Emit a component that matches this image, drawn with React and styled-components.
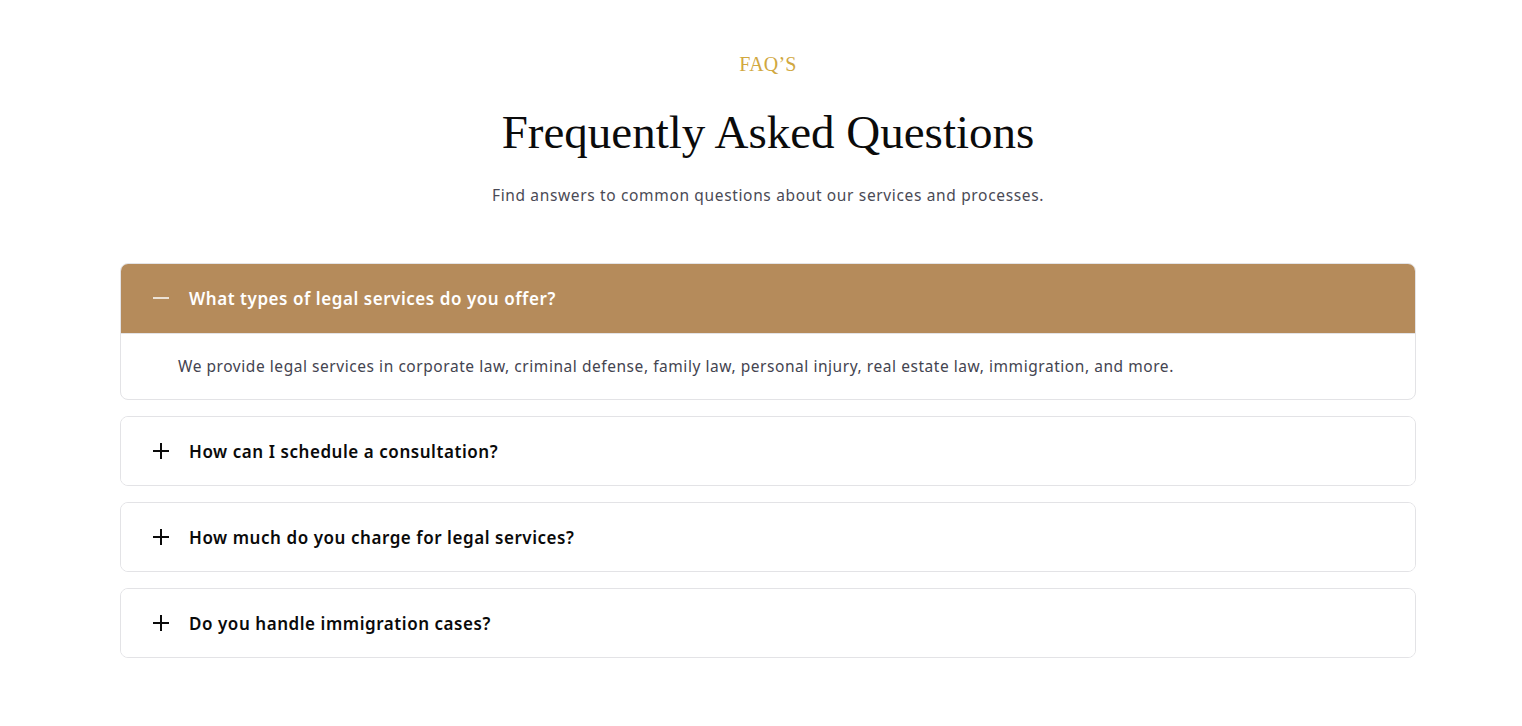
import React, { useState } from 'react';
import styled, { createGlobalStyle } from 'styled-components';

const GlobalStyle = createGlobalStyle`
    body {
        margin: 0;
        background: #ffffff;
        font-family: 'Noto Sans', 'Open Sans', sans-serif;
    }
`;

const Section = styled.section`
    padding: 50px 106px 68px 120px;
`;

const Header = styled.div`
    display: flex;
    flex-direction: column;
    align-items: center;
    text-align: center;
`;

const Eyebrow = styled.span`
    font-family: 'Liberation Serif', serif;
    font-size: 20px;
    line-height: 28px;
    color: #d1a83f;
    letter-spacing: 0.2px;
`;

const Title = styled.h2`
    margin: 25px 0 0;
    font-family: 'Liberation Serif', serif;
    font-weight: 400;
    font-size: 47px;
    line-height: 58px;
    color: #0b0b0b;
`;

const Subtitle = styled.p`
    margin: 22px 0 0;
    font-size: 15.5px;
    line-height: 24px;
    color: #4a4a55;
    letter-spacing: 0.65px;
`;

const List = styled.div`
    display: flex;
    flex-direction: column;
    gap: 16px;
    margin-top: 56px;
`;

const Item = styled.div`
    border: 1px solid #e3e3e6;
    border-radius: 8px;
    overflow: hidden;
`;

const Question = styled.button`
    display: flex;
    align-items: center;
    gap: 20px;
    height: ${(p) => (p.$open ? '70px' : '68px')};
    margin: ${(p) => (p.$open ? '-1px -1px 0' : '0')};
    width: ${(p) => (p.$open ? 'calc(100% + 2px)' : '100%')};
    padding: 0 0 0 ${(p) => (p.$open ? '33px' : '32px')};
    border: none;
    background: ${(p) => (p.$open ? '#b58b5b' : '#ffffff')};
    color: ${(p) => (p.$open ? '#ffffff' : '#0a0a0a')};
    font-family: 'Noto Sans', 'Open Sans', sans-serif;
    font-size: 17px;
    font-weight: 600;
    letter-spacing: 0.55px;
    text-align: left;
    cursor: pointer;
`;

const Icon = styled.svg`
    flex: none;
    width: 16px;
    height: 16px;
`;

const Answer = styled.div`
    padding: 21px 57px 22px;
    border-top: 1px solid #e3e3e6;
    font-size: 15.5px;
    line-height: 22px;
    color: #444450;
    letter-spacing: 0.55px;
`;

const faqs = [
    {
        q: 'What types of legal services do you offer?',
        a: 'We provide legal services in corporate law, criminal defense, family law, personal injury, real estate law, immigration, and more.'
    },
    {
        q: 'How can I schedule a consultation?',
        a: 'You can schedule a consultation by calling our office or filling out the contact form on our website.'
    },
    {
        q: 'How much do you charge for legal services?',
        a: 'Our fees depend on the type and complexity of the case. We offer transparent pricing after the initial consultation.'
    },
    {
        q: 'Do you handle immigration cases?',
        a: 'Yes, our team assists with visas, residency, citizenship and other immigration matters.'
    }
];

const App = () => {
    const [open, setOpen] = useState(0);

    return (
        <>
            <GlobalStyle />
            <Section>
                <Header>
                    <Eyebrow>FAQ’S</Eyebrow>
                    <Title>Frequently Asked Questions</Title>
                    <Subtitle>Find answers to common questions about our services and processes.</Subtitle>
                </Header>

                <List>
                    {faqs.map((item, i) => {
                        const isOpen = open === i;
                        return (
                            <Item key={i}>
                                <Question $open={isOpen} onClick={() => setOpen(isOpen ? -1 : i)}>
                                    <Icon viewBox="0 0 16 16" fill="none" stroke="currentColor" strokeWidth={isOpen ? 1.6 : 2}>
                                        <path d="M0 8h16" />
                                        {!isOpen && <path d="M8 0v16" />}
                                    </Icon>
                                    {item.q}
                                </Question>
                                {isOpen && <Answer>{item.a}</Answer>}
                            </Item>
                        );
                    })}
                </List>
            </Section>
        </>
    );
};

export default App;
